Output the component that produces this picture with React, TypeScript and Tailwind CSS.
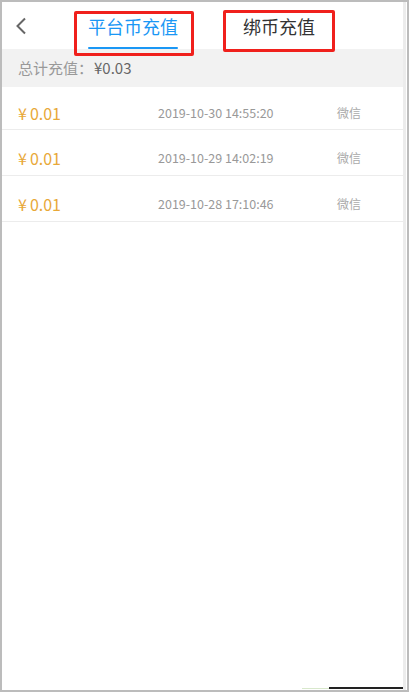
import React from "react";

const rows = [
  { amt: "0.01", date: "2019-10-30 14:55:20", via: "微信" },
  { amt: "0.01", date: "2019-10-29 14:02:19", via: "微信" },
  { amt: "0.01", date: "2019-10-28 17:10:46", via: "微信" },
];

export default function App() {
  return (
    <div
      className="relative w-[411px] h-[693px] bg-white overflow-hidden"
      style={{ fontFamily: '"Noto Sans CJK SC", "Noto Sans", sans-serif' }}
    >
      <div className="w-[409px] h-[692px] border-2 border-[#bcbcbc] flex">
        <div className="w-[401px] flex flex-col">
          {/* nav */}
          <div className="h-[47px] flex items-center relative">
            <svg className="ml-[13px]" width="12" height="18" viewBox="0 0 12 18">
              <path d="M10 1.5 L2.5 9 L10 16.5" fill="none" stroke="#666" strokeWidth="2" />
            </svg>
            <div className="ml-[61px] relative h-full flex items-center">
              <span className="text-[18px] leading-none text-[#1a97f5]">平台币充值</span>
              <div className="absolute left-0 right-0 bottom-0 h-[2px] bg-[#1a97f5] rounded-full" />
            </div>
            <span className="ml-[65px] text-[18px] leading-none text-[#333]">绑币充值</span>
          </div>
          {/* total */}
          <div className="h-[38px] bg-[#f2f2f2] flex items-center pl-[16px] text-[15px]">
            <span className="text-[#999]">总计充值：</span>
            <span className="text-[#666] ml-[1px]">¥0.03</span>
          </div>
          {rows.map((r, i) => (
            <div
              key={i}
              className={
                i === 0
                  ? "h-[43px] pt-[10px] border-b border-[#ececec] flex items-center"
                  : "h-[46px] pt-[11px] border-b border-[#ececec] flex items-center"
              }
            >
              <span className="ml-[16px] w-[140px] text-[16px] text-[#e8a838]">
                ¥<span className="ml-[3px]">{r.amt}</span>
              </span>
              <span className="w-[179px] text-[12.5px] text-[#999]">{r.date}</span>
              <span className="text-[12px] text-[#aaa]">{r.via}</span>
            </div>
          ))}
        </div>
        <div className="w-[3px] bg-[#ececec]" />
      </div>
      {/* bottom bits */}
      <div className="absolute left-[302px] top-[688px] w-[27px] h-[1px] bg-[#d8e8cc]" />
      <div className="absolute left-[329px] top-[687px] w-[74px] h-[2px] bg-[#222]" />
      {/* annotation boxes */}
      <div className="absolute left-[74px] top-[11px] w-[120px] h-[45px] border-[3px] border-[#f0201c] rounded-[2px]" />
      <div className="absolute left-[223px] top-[10px] w-[112px] h-[42px] border-[3px] border-[#f0201c] rounded-[2px]" />
    </div>
  );
}
